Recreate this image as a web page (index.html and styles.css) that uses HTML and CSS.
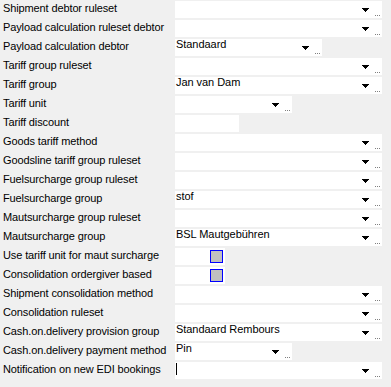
FILE: index.html
```html
<!DOCTYPE html>
<html>
<head>
<meta charset="utf-8">
<link rel="stylesheet" href="styles.css">
</head>
<body>
<div class="form">
  <div class="label">Shipment debtor ruleset</div>
  <div class="field full"><span class="val"></span><span class="arrow"></span><span class="dots"></span></div>

  <div class="label">Payload calculation ruleset debtor</div>
  <div class="field full"><span class="val"></span><span class="arrow"></span><span class="dots"></span></div>

  <div class="label">Payload calculation debtor</div>
  <div class="field short"><span class="val">Standaard</span><span class="arrow"></span><span class="dots"></span></div>

  <div class="label">Tariff group ruleset</div>
  <div class="field full"><span class="val"></span><span class="arrow"></span><span class="dots"></span></div>

  <div class="label">Tariff group</div>
  <div class="field full"><span class="val">Jan van Dam</span><span class="arrow"></span><span class="dots"></span></div>

  <div class="label">Tariff unit</div>
  <div class="field medium"><span class="val"></span><span class="arrow"></span><span class="dots"></span></div>

  <div class="label">Tariff discount</div>
  <div class="field plain"><span class="val"></span></div>

  <div class="label">Goods tariff method</div>
  <div class="field full"><span class="val"></span><span class="arrow"></span><span class="dots"></span></div>

  <div class="label">Goodsline tariff group ruleset</div>
  <div class="field full"><span class="val"></span><span class="arrow"></span><span class="dots"></span></div>

  <div class="label">Fuelsurcharge group ruleset</div>
  <div class="field full"><span class="val"></span><span class="arrow"></span><span class="dots"></span></div>

  <div class="label">Fuelsurcharge group</div>
  <div class="field full"><span class="val">stof</span><span class="arrow"></span><span class="dots"></span></div>

  <div class="label">Mautsurcharge group ruleset</div>
  <div class="field full"><span class="val"></span><span class="arrow"></span><span class="dots"></span></div>

  <div class="label">Mautsurcharge group</div>
  <div class="field full"><span class="val">BSL Mautgebühren</span><span class="arrow"></span><span class="dots"></span></div>

  <div class="label">Use tariff unit for maut surcharge</div>
  <div class="field check"><span class="box"></span></div>

  <div class="label">Consolidation ordergiver based</div>
  <div class="field check"><span class="box"></span></div>

  <div class="label">Shipment consolidation method</div>
  <div class="field full"><span class="val"></span><span class="arrow"></span><span class="dots"></span></div>

  <div class="label">Consolidation ruleset</div>
  <div class="field full"><span class="val"></span><span class="arrow"></span><span class="dots"></span></div>

  <div class="label">Cash.on.delivery provision group</div>
  <div class="field full"><span class="val">Standaard Rembours</span><span class="arrow"></span><span class="dots"></span></div>

  <div class="label">Cash.on.delivery payment method</div>
  <div class="field medium"><span class="val">Pin</span><span class="arrow"></span><span class="dots"></span></div>

  <div class="label">Notification on new EDI bookings</div>
  <div class="field full"><span class="val"><span class="caret"></span></span><span class="arrow"></span><span class="dots"></span></div>
</div>
</body>
</html>
```

FILE: styles.css
```css
html, body {
  margin: 0;
  padding: 0;
  background: #f0f0f0;
}
body {
  font-family: "Liberation Sans", Arial, sans-serif;
  font-size: 11px;
  color: #000;
}
.form {
  display: grid;
  grid-template-columns: 172px auto;
  grid-auto-rows: 17px;
  row-gap: 2px;
  padding: 1px 0 0 3px;
  justify-items: start;
}
.label {
  line-height: 15px;
  white-space: nowrap;
  letter-spacing: -0.12px;
}
.field {
  background: #fff;
  height: 17px;
  display: flex;
  align-items: flex-start;
  box-sizing: border-box;
  padding-right: 2px;
}
.full { width: 207px; }
.short { width: 147px; }
.medium { width: 117px; }
.plain { width: 64px; }
.check { width: 50px; }
.val {
  flex: 1;
  line-height: 11px;
  padding-left: 1px;
  white-space: nowrap;
  letter-spacing: -0.05px;
}
.caret {
  display: block;
  width: 1px;
  height: 12px;
  background: #000;
  margin-top: 1px;
}
.arrow {
  width: 7px;
  height: 4px;
  margin-top: 7px;
  margin-right: 5px;
  background: #000;
  clip-path: polygon(0 0, 100% 0, 100% 25%, 85.7% 25%, 85.7% 50%, 71.4% 50%, 71.4% 75%, 57.1% 75%, 57.1% 100%, 42.9% 100%, 42.9% 75%, 28.6% 75%, 28.6% 50%, 14.3% 50%, 14.3% 25%, 0 25%);
}
.dots {
  width: 6px;
  height: 1px;
  margin-top: 14px;
  background: linear-gradient(to right, transparent 0 1px, #808080 1px 2px, transparent 2px 3px, #808080 3px 4px, transparent 4px 5px, #808080 5px 6px);
}
.box {
  width: 13px;
  height: 13px;
  box-sizing: border-box;
  border: 1px solid #0000ff;
  background: #c0c0c0;
  margin: 2px 0 0 35px;
}
```
